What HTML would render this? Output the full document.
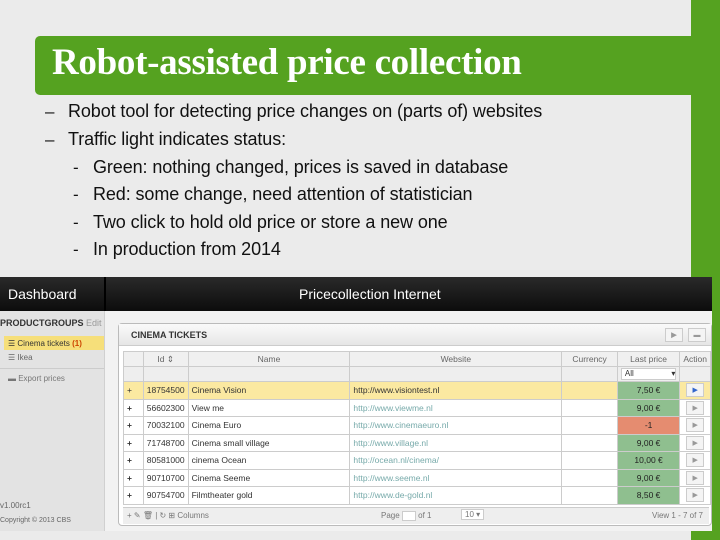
<!DOCTYPE html>
<html><head><meta charset="utf-8"><style>
*{margin:0;padding:0;box-sizing:border-box}
body{width:720px;height:540px;background:#ebebeb;position:relative;overflow:hidden;font-family:"Liberation Sans",sans-serif}
.gr{position:absolute;left:691px;top:0;width:29px;height:540px;background:#55a220}
.title{position:absolute;left:35px;top:36px;width:656px;height:59px;background:#55a220;border-radius:5px 0 0 5px;color:#fff;font-family:"Liberation Serif",serif;font-weight:bold;font-size:37px;padding:5px 0 0 17px;letter-spacing:-0.3px}
.b{position:absolute;font-family:"Liberation Sans",sans-serif;font-size:18px;color:#111;white-space:nowrap;letter-spacing:-0.1px}
.d{position:absolute;font-size:17px;color:#111}
.shot{position:absolute;left:0;top:277px;width:712px;height:254px;background:#f2f2f2}
.hdr{position:absolute;left:0;top:0;width:712px;height:34px;background:linear-gradient(#2a2a2a,#0c0c0c);color:#fff;font-size:14px}
.side{position:absolute;left:0;top:34px;width:105px;height:220px;background:#e3e3e3;border-right:1px solid #d0d0d0;font-size:9px;color:#333}
.panel{position:absolute;left:118px;top:46px;width:594px;height:203px;background:#fff;border:1px solid #bbb;border-radius:4px}
.ph{height:22px;background:linear-gradient(#fafafa,#e6e6e6);border-bottom:1px solid #ccc;font-size:9px;font-weight:bold;padding:6px 0 0 12px;color:#333}
table{position:absolute;left:4px;top:27px;border-collapse:collapse;font-size:8.5px;color:#333;table-layout:fixed}
td,th{border:1px solid #ccc;height:17.5px;padding:0 3px;white-space:nowrap;overflow:hidden}
th{font-weight:normal;color:#666;background:#f0f0f0;height:15px}
.f td{background:#eee;height:15px}
.y td{background:#fbe9a1}
.w{color:#7aa}
.g{background:#8fbf8f!important;text-align:center;color:#222}
.r{background:#e58c70!important;text-align:center;color:#222}
.btn{display:inline-block;width:18px;height:14px;border:1px solid #ccc;background:#f4f4f4;font-size:7px;color:#999;text-align:center;line-height:13px}
</style></head><body>
<div class="gr"></div>
<div class="title">Robot-assisted price collection</div>
<div class="d" style="left:45px;top:102px">–</div><div class="b" style="left:68px;top:101px">Robot tool for detecting price changes on (parts of) websites</div>
<div class="d" style="left:45px;top:130px">–</div><div class="b" style="left:68px;top:129px">Traffic light indicates status:</div>
<div class="d" style="left:73px;top:158px">-</div><div class="b" style="left:93px;top:157px">Green: nothing changed, prices is saved in database</div>
<div class="d" style="left:73px;top:185px">-</div><div class="b" style="left:93px;top:184px">Red: some change, need attention of statistician</div>
<div class="d" style="left:73px;top:213px">-</div><div class="b" style="left:93px;top:212px">Two click to hold old price or store a new one</div>
<div class="d" style="left:73px;top:240px">-</div><div class="b" style="left:93px;top:239px">In production from 2014</div>
<div class="shot">
<div class="hdr"><span style="position:absolute;left:8px;top:9px">Dashboard</span><div style="position:absolute;left:104px;top:0;width:2px;height:34px;background:#000"></div><span style="position:absolute;left:299px;top:9px">Pricecollection Internet</span></div>
<div class="side">
<div style="position:absolute;left:0;top:7px;font-weight:bold;font-size:9px">PRODUCTGROUPS <span style="font-weight:normal;color:#999">Edit</span></div>
<div style="position:absolute;left:4px;top:25px;width:100px;height:14px;background:#f6df7a"></div>
<div style="position:absolute;left:8px;top:28px;font-size:8px">☰ Cinema tickets <b style="color:#c40">(1)</b></div>
<div style="position:absolute;left:8px;top:42px;font-size:8px;color:#666">☰ Ikea</div>
<div style="position:absolute;left:0;top:57px;width:104px;height:1px;background:#ccc"></div>
<div style="position:absolute;left:8px;top:63px;font-size:8px;color:#777">▬ Export prices</div>
<div style="position:absolute;left:0;top:190px;font-size:8px;color:#666">v1.00rc1</div>
<div style="position:absolute;left:0;top:206px;font-size:7px;color:#666">Copyright © 2013 CBS</div>
</div>
<div class="panel">
<div class="ph">CINEMA TICKETS<span class="btn" style="position:absolute;right:28px;top:4px">▶</span><span class="btn" style="position:absolute;right:5px;top:4px">▬</span></div>
<table>
<colgroup><col style="width:20px"><col style="width:43px"><col style="width:164px"><col style="width:215px"><col style="width:56px"><col style="width:63px"><col style="width:29px"></colgroup>
<tr><th></th><th>Id ⇕</th><th>Name</th><th>Website</th><th>Currency</th><th>Last price</th><th>Action</th></tr>
<tr class="f"><td></td><td></td><td></td><td></td><td></td><td style="background:#eee"><div style="background:#fff;border:1px solid #ccc;height:12px;font-size:8px;padding-left:3px">All <span style="float:right">▾</span></div></td><td></td></tr>
<tr class="y"><td>+</td><td>18754500</td><td>Cinema Vision</td><td>http://www.visiontest.nl</td><td></td><td class="g">7,50 €</td><td style="text-align:center"><span class="btn" style="color:#36c">▶</span></td></tr>
<tr><td><b>+</b></td><td>56602300</td><td>View me</td><td class="w">http://www.viewme.nl</td><td></td><td class="g">9,00 €</td><td style="text-align:center"><span class="btn">▶</span></td></tr>
<tr><td><b>+</b></td><td>70032100</td><td>Cinema Euro</td><td class="w">http://www.cinemaeuro.nl</td><td></td><td class="r">-1</td><td style="text-align:center"><span class="btn">▶</span></td></tr>
<tr><td><b>+</b></td><td>71748700</td><td>Cinema small village</td><td class="w">http://www.village.nl</td><td></td><td class="g">9,00 €</td><td style="text-align:center"><span class="btn">▶</span></td></tr>
<tr><td><b>+</b></td><td>80581000</td><td>cinema Ocean</td><td class="w">http://ocean.nl/cinema/</td><td></td><td class="g">10,00 €</td><td style="text-align:center"><span class="btn">▶</span></td></tr>
<tr><td><b>+</b></td><td>90710700</td><td>Cinema Seeme</td><td class="w">http://www.seeme.nl</td><td></td><td class="g">9,00 €</td><td style="text-align:center"><span class="btn">▶</span></td></tr>
<tr><td><b>+</b></td><td>90754700</td><td>Filmtheater gold</td><td class="w">http://www.de-gold.nl</td><td></td><td class="g">8,50 €</td><td style="text-align:center"><span class="btn">▶</span></td></tr>
</table>
<div style="position:absolute;left:4px;top:183px;width:586px;height:17px;background:#eee;border-top:1px solid #ccc;font-size:8px;color:#777;padding-top:3px">
<span style="margin-left:4px">+ ✎ 🗑 | ↻ ⊞ Columns</span>
<span style="position:absolute;left:258px;top:3px">Page <span style="display:inline-block;width:14px;height:10px;background:#fff;border:1px solid #ccc;vertical-align:middle"></span> of 1</span>
<span style="position:absolute;left:338px;top:1px;background:#fff;border:1px solid #ccc;padding:0 3px">10 ▾</span>
<span style="position:absolute;right:6px;top:3px">View 1 - 7 of 7</span>
</div>
</div>
</div>
</body></html>
